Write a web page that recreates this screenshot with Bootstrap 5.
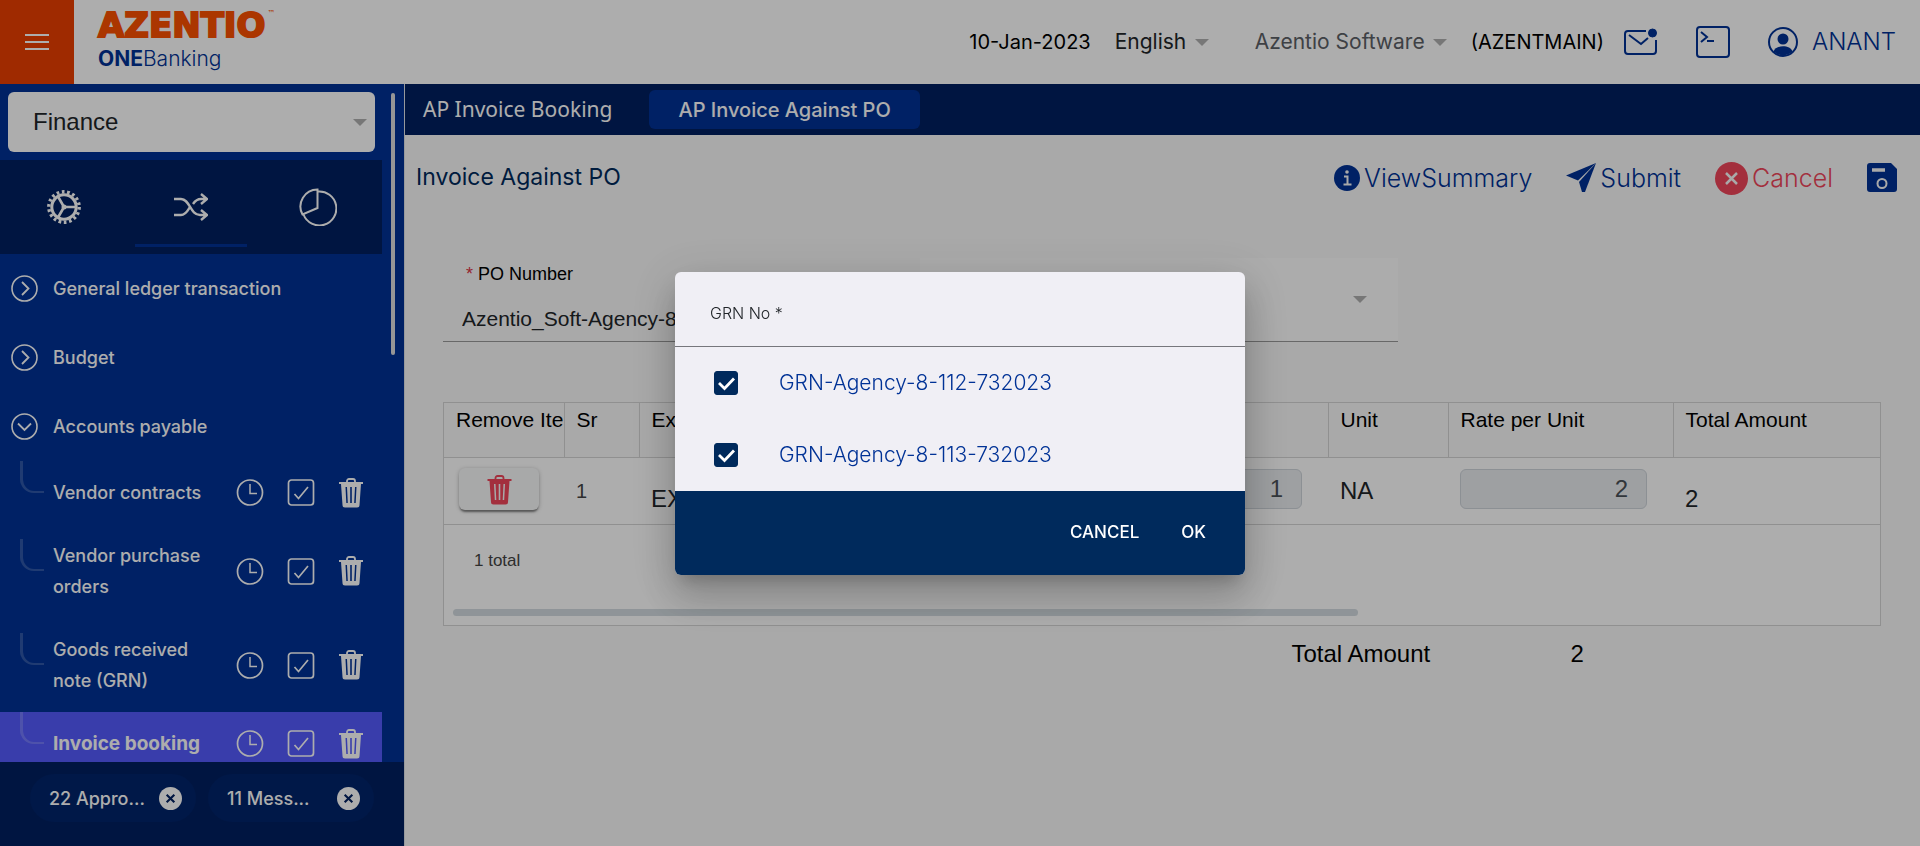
<!DOCTYPE html>
<html lang="en">
<head>
<meta charset="utf-8">
<meta name="viewport" content="width=device-width, initial-scale=1">
<title>Azentio ONEBanking - Invoice Against PO</title>
<link rel="stylesheet" href="https://cdn.jsdelivr.net/npm/bootstrap@5.3.0/dist/css/bootstrap.min.css">
<style>
  :root { --navy:#002060; --royal:#003296; --ink:#002a5c; --danger:#f0465a; --line:#d5d5d5; }
  body { font-family: Inter, "Liberation Sans", sans-serif; background:#fafafa; color:#212529; }
  .arial { font-family:"Liberation Sans", Arial, sans-serif; }
  a { text-decoration:none; }
  .caret-select { appearance:none; border:0; background:transparent url("data:image/svg+xml,%3Csvg xmlns='http://www.w3.org/2000/svg' width='14' height='7'%3E%3Cpath d='M0 0h14L7 7z' fill='%23b0b0b0'/%3E%3C/svg%3E") no-repeat right center; padding:0 22px 0 0; color:inherit; }

  /* top bar */
  .topbar { height:84px; background:#fff; }
  .burger { width:74px; background:#eb3f00; border:0; }
  .wordmark { font:bold 34px/34px "DejaVu Sans", sans-serif; color:#fc5000; -webkit-text-stroke:2px #fc5000; gap:2px; }
  .wordmark small { font-size:8px; line-height:12px; font-weight:400; -webkit-text-stroke:0; }
  .product { font-size:21px; line-height:34px; color:var(--royal); font-weight:300; }
  .product b { font-weight:700; }
  .top-text { font-size:20px; color:#000; }
  .top-select { font-size:21px; }
  .company { color:#5c6066; margin-left:46px; }
  .top-tools { gap:38px; margin-left:20px; }
  .user-name { font-size:24px; font-weight:300; color:var(--royal); gap:14px; }

  /* sidebar */
  .sidebar { width:404px; background:var(--royal); color:#fff; }
  .side-scroll { min-height:0; }
  .module-select { height:60px; margin:8px 29px 8px 8px; padding-left:25px; font-size:24px; border-radius:6px; background-color:#fff; background-position:right 8px center; color:#212529; width:367px; }
  .side-tabs { height:94px; width:382px; background:var(--navy); }
  .side-tabs a { color:#fff; height:94px; }
  .side-tabs a.active span { border-bottom:3px solid var(--royal); width:112px; height:87px; margin-bottom:7px; padding-top:9px; }
  .side-bar-thumb { width:4px; height:262px; right:9px; top:9px; background:#dedede; border-radius:2px; }
  .menu-link { height:69px; padding-left:11px; gap:15px; color:#fff; font-size:18px; font-weight:500; }
  .sub-row { width:382px; padding:16px 18px 16px 53px; font-size:18px; line-height:31px; font-weight:500; }
  .sub-row::before { content:""; position:absolute; left:20px; top:calc(50% - 32px); width:24px; height:32px; border-left:3px solid #ffffff30; border-bottom:2px solid #ffffff30; border-bottom-left-radius:14px; }
  .sub-row a { color:#fff; }
  .sub-row.current { background:#545bfd; font-size:19px; font-weight:700; }
  .sub-tools { gap:23px; }
  .plain-btn { border:0; background:none; padding:0; color:inherit; font-weight:inherit; line-height:1; display:flex; align-items:center; }
  .side-foot { height:84px; background:var(--navy); padding:0 30px 12px; gap:12px; }
  .chip { height:48px; width:166px; border-radius:24px; background:#00246a; padding:0 14px 0 19px; font-size:18px; font-weight:500; }

  /* work area */
  .tabstrip { height:51px; background:var(--navy); padding-left:18px; gap:37px; }
  .tabstrip a { color:#fff; font-size:20px; }
  .tabstrip .back-tab { font-family:"Noto Sans", sans-serif; font-size:21px; }
  .tabstrip .front-tab { height:39px; padding:0 29px; border-radius:6px; background:var(--royal); font-weight:500; }
  .page-head { padding:0 23px 0 11px; height:86px; }
  .page-head h1 { font-size:23px; font-weight:400; color:var(--ink); }
  .page-head button { font-size:25px; font-weight:300; color:var(--royal); gap:4px; }
  .page-head .cancel { color:var(--danger); }
  .head-actions { gap:34px; }
  .work-body { padding:37px 39px 0 38px; }
  .pair { width:66.4%; height:84px; border-bottom:1px solid #9a9a9a; }
  .pair > div { flex:1 1 50%; }
  .pair label { font-size:18px; line-height:22px; color:#000; padding:5px 0 0 23px; display:block; }
  .pair input { border:0; background:none; padding:0 0 0 19px; margin-top:12px; font-size:21px; width:100%; color:#212529; height:44px; }
  .grn-select { width:100%; height:83px; background-color:#fefefe; background-position:right 31px center; }
  .grid-box { margin-top:60px; border:1px solid var(--line); background:#fff; height:224px; }
  .grid-table { table-layout:fixed; width:100%; color:#212529; }
  .grid-table th { height:54px; font-size:21px; font-weight:400; line-height:24px; color:#000; padding:5px 0 0 12px; vertical-align:top; border-right:1px solid var(--line); border-bottom:1px solid var(--line); background:#fafafa; white-space:nowrap; overflow:hidden; }
  .grid-table th:last-child { border-right:0; }
  .grid-table td { height:67px; padding:0 12px; border-bottom:1px solid var(--line); font-size:24px; white-space:nowrap; vertical-align:middle; }
  .grid-table td.low { padding-top:16px; }
  .grid-table td.seq { font-size:20px; color:#444; }
  .grid-table td.entry { padding:0 26px 4px 12px; }
  .bin-btn { width:80px; height:42px; margin-left:3px; border:0; border-radius:6px; background:#f8f9fa; color:var(--danger); box-shadow:0 3px 2px -1px #0006, 0 1px 4px #0004; }
  .num-in { width:100%; height:40px; border:1px solid #ced4da; border-radius:6px; background:#e9ecef; color:#495057; text-align:right; padding:0 18px; font-size:24px; }
  .grid-total { font-size:17px; line-height:28px; color:#444; padding:22px 30px 0; }
  .grid-thumb { height:7px; width:63%; margin:34px 0 0 9px; border-radius:4px; background:#d3dbe0; }
  .sum-line { font-size:24px; color:#000; margin-top:10px; padding-left:59%; }
  .sum-line span:first-child { width:279px; }

  /* dialog */
  .modal-backdrop.show { opacity:.32; }
  .modal-dialog { max-width:570px; }
  .modal-content { border:0; border-radius:6px; overflow:hidden; background:#f0eff5; box-shadow:0 11px 15px -7px #0003, 0 24px 38px 3px #00000024, 0 9px 46px 8px #0000001f; }
  .dlg-head { height:75px; padding:8px 35px 0; border-bottom:1px solid #76767c; font-size:16px; font-weight:300; color:#212529; }
  .dlg-row { height:72px; padding-left:39px; gap:41px; font-size:21px; font-weight:300; color:#003296; }
  .dlg-row .form-check-input { width:24px; height:24px; margin:0; border-radius:3px; }
  .dlg-row .form-check-input:checked { background-color:var(--ink); border-color:var(--ink); background-size:24px; background-image:url("data:image/svg+xml,%3Csvg xmlns='http://www.w3.org/2000/svg' viewBox='0 0 24 24'%3E%3Cpath d='M5 12l5.500 5.500L20 7.500' fill='none' stroke='%23fff' stroke-width='2.800'/%3E%3C/svg%3E"); }
  .dlg-foot { height:84px; background:var(--ink); padding-right:39px; gap:42px; color:#fff; font-size:17px; font-weight:500; }
</style>
</head>
<body class="vh-100 overflow-hidden d-flex flex-column">

<svg class="d-none">
  <symbol id="i-next" viewBox="0 0 27 27"><circle cx="13.500" cy="13.500" r="12.500" fill="none" stroke="currentColor" stroke-width="1.600"/><path d="M11 7l6.500 6.500L11 20" fill="none" stroke="currentColor" stroke-width="1.800"/></symbol>
  <symbol id="i-open" viewBox="0 0 27 27"><circle cx="13.500" cy="13.500" r="12.500" fill="none" stroke="currentColor" stroke-width="1.600"/><path d="M7 10.500l6.500 6.500 6.500-6.500" fill="none" stroke="currentColor" stroke-width="1.800"/></symbol>
  <symbol id="i-clock" viewBox="0 0 27 27"><circle cx="13.500" cy="13.500" r="12.500" fill="none" stroke="currentColor" stroke-width="1.700"/><path d="M13.500 5v9.500h7" fill="none" stroke="currentColor" stroke-width="1.500"/></symbol>
  <symbol id="i-tick" viewBox="0 0 27 27"><rect x="1" y="1" width="25" height="25" rx="3" fill="none" stroke="currentColor" stroke-width="1.700"/><path d="M7 15l4 4.500L20.500 8" fill="none" stroke="currentColor" stroke-width="1.700"/></symbol>
  <symbol id="i-bin" viewBox="0 0 25 30"><path d="M8.500 4.500V3a2 2 0 0 1 2-2h4a2 2 0 0 1 2 2v1.500" fill="none" stroke="currentColor" stroke-width="1.800"/><path fill="currentColor" fill-rule="evenodd" d="M.5 4h24v2H22.500L21 27a2.500 2.500 0 0 1-2.500 2.500h-12A2.500 2.500 0 0 1 4 27L2.500 6H.5zM7 9l.8 16h1.500L8.500 9zM11.700 9v16h1.600V9zM16.500 9l-.8 16h1.500L18 9z"/></symbol>
  <symbol id="i-x" viewBox="0 0 24 24"><circle cx="12" cy="12" r="12" fill="currentColor"/></symbol>
</svg>

<header class="topbar d-flex flex-shrink-0">
  <button class="burger d-flex align-items-center justify-content-center" aria-label="Menu"><svg width="24" height="16" viewBox="0 0 24 16" stroke="#fff" stroke-width="2"><path d="M0 1h24M0 8h24M0 15h24"/></svg></button>
  <div class="ps-4 pt-2">
    <div class="wordmark d-flex">AZENTIO<small>™</small></div>
    <div class="product"><b>ONE</b>Banking</div>
  </div>
  <div class="d-flex align-items-center ms-auto pe-4">
    <span class="top-text">10-Jan-2023</span>
    <select class="caret-select top-select ms-4" aria-label="Language"><option>English</option></select>
    <select class="caret-select top-select company" aria-label="Company"><option>Azentio Software</option></select>
    <span class="top-text ms-4">(AZENTMAIN)</span>
    <div class="top-tools d-flex align-items-center">
      <a href="#" aria-label="Messages"><svg width="34" height="28" viewBox="0 0 34 28" fill="none" stroke="#003296" stroke-width="2"><path d="M22 3H4a3 3 0 0 0-3 3v17a3 3 0 0 0 3 3h25a3 3 0 0 0 3-3V12"/><path d="M5 7l12 9 7-6"/><circle cx="28.500" cy="5" r="4" fill="#003296" stroke-width="1"/></svg></a>
      <a href="#" aria-label="Console"><svg width="34" height="32" viewBox="0 0 34 32" fill="none" stroke="#003296" stroke-width="2"><rect x="1" y="1" width="32" height="30" rx="3"/><path d="M5 6l6 5-6 5M11 15h7"/></svg></a>
      <a href="#" class="user-name d-flex align-items-center"><svg width="30" height="30" viewBox="0 0 30 30"><circle cx="15" cy="15" r="14" fill="none" stroke="#003296" stroke-width="2"/><circle cx="15" cy="12" r="5.500" fill="#003296"/><path d="M5.500 24.500c2-7 17-7 19 0a14 14 0 0 1-19 0z" fill="#003296"/></svg>ANANT</a>
    </div>
  </div>
</header>

<div class="d-flex flex-grow-1 side-scroll">
  <aside class="sidebar flex-shrink-0 d-flex flex-column">
    <div class="side-scroll flex-grow-1 overflow-hidden position-relative">
      <select class="caret-select module-select arial d-block" aria-label="Module"><option>Finance</option></select>
      <nav class="side-tabs d-flex">
        <a href="#" class="col-4 d-flex align-items-center justify-content-center" aria-label="Settings"><svg width="34" height="34" viewBox="0 0 34 34" fill="none" stroke="#fff"><circle cx="17" cy="17" r="15.200" stroke-width="3.400" stroke-dasharray="2.700 2.606"/><circle cx="17" cy="17" r="12.200" stroke-width="3"/><circle cx="17" cy="17" r="1.500" stroke-width="2"/><path d="M17 17h12M17 17l-6-10.500M17 17l-6 10.500" stroke-width="2.600"/></svg></a>
        <a href="#" class="active col-4 d-flex align-items-center justify-content-center" aria-label="Transactions"><span class="d-flex align-items-center justify-content-center"><svg width="34" height="28" viewBox="0 0 34 28" fill="none" stroke="#fff" stroke-width="2.400"><path d="M0 6h7c9 0 9 16 19 16h7M0 22h7c5 0 7-5 9-8M19 11c2-3 4-5 8-5h6M27 1l6 5-6 5M27 17l6 5-6 5"/></svg></span></a>
        <a href="#" class="col-4 d-flex align-items-center justify-content-center" aria-label="Reports"><svg width="38" height="38" viewBox="0 0 38 38" fill="none" stroke="#fff" stroke-width="2"><path d="M18.500 1.500V20L3.500 26.500A17 17 0 0 1 18.500 1.500z"/><path d="M18.500 3.500A17 17 0 1 1 4.500 26.500"/></svg></a>
      </nav>
      <nav>
        <a href="#" class="menu-link d-flex align-items-center"><svg width="27" height="27"><use href="#i-next"/></svg>General ledger transaction</a>
        <a href="#" class="menu-link d-flex align-items-center"><svg width="27" height="27"><use href="#i-next"/></svg>Budget</a>
        <a href="#" class="menu-link d-flex align-items-center"><svg width="27" height="27"><use href="#i-open"/></svg>Accounts payable</a>
        <div class="sub-row position-relative d-flex align-items-center justify-content-between"><a href="#">Vendor contracts</a>
          <div class="sub-tools d-flex align-items-center"><button class="plain-btn" aria-label="Pending"><svg width="28" height="27"><use href="#i-clock"/></svg></button><button class="plain-btn" aria-label="Approve"><svg width="28" height="27"><use href="#i-tick"/></svg></button><button class="plain-btn" aria-label="Delete"><svg width="26" height="30"><use href="#i-bin"/></svg></button></div></div>
        <div class="sub-row position-relative d-flex align-items-center justify-content-between"><a href="#">Vendor purchase<br>orders</a>
          <div class="sub-tools d-flex align-items-center"><button class="plain-btn" aria-label="Pending"><svg width="28" height="27"><use href="#i-clock"/></svg></button><button class="plain-btn" aria-label="Approve"><svg width="28" height="27"><use href="#i-tick"/></svg></button><button class="plain-btn" aria-label="Delete"><svg width="26" height="30"><use href="#i-bin"/></svg></button></div></div>
        <div class="sub-row position-relative d-flex align-items-center justify-content-between"><a href="#">Goods received<br>note (GRN)</a>
          <div class="sub-tools d-flex align-items-center"><button class="plain-btn" aria-label="Pending"><svg width="28" height="27"><use href="#i-clock"/></svg></button><button class="plain-btn" aria-label="Approve"><svg width="28" height="27"><use href="#i-tick"/></svg></button><button class="plain-btn" aria-label="Delete"><svg width="26" height="30"><use href="#i-bin"/></svg></button></div></div>
        <div class="sub-row current position-relative d-flex align-items-center justify-content-between"><a href="#">Invoice booking</a>
          <div class="sub-tools d-flex align-items-center"><button class="plain-btn" aria-label="Pending"><svg width="28" height="27"><use href="#i-clock"/></svg></button><button class="plain-btn" aria-label="Approve"><svg width="28" height="27"><use href="#i-tick"/></svg></button><button class="plain-btn" aria-label="Delete"><svg width="26" height="30"><use href="#i-bin"/></svg></button></div></div>
      </nav>
      <div class="side-bar-thumb position-absolute"></div>
    </div>
    <div class="side-foot d-flex align-items-center flex-shrink-0">
      <div class="chip d-flex align-items-center justify-content-between"><span>22 Appro...</span><button class="plain-btn" aria-label="Dismiss"><svg width="23" height="23" viewBox="0 0 24 24"><use href="#i-x"/><path d="M8 8l8 8M16 8l-8 8" stroke="#002060" stroke-width="2.200"/></svg></button></div>
      <div class="chip d-flex align-items-center justify-content-between"><span>11 Mess...</span><button class="plain-btn" aria-label="Dismiss"><svg width="23" height="23" viewBox="0 0 24 24"><use href="#i-x"/><path d="M8 8l8 8M16 8l-8 8" stroke="#002060" stroke-width="2.200"/></svg></button></div>
    </div>
  </aside>

  <main class="flex-grow-1 border-start overflow-hidden">
    <nav class="tabstrip d-flex align-items-center">
      <a href="#" class="back-tab">AP Invoice Booking</a>
      <a href="#" class="front-tab d-flex align-items-center">AP Invoice Against PO</a>
    </nav>
    <div class="page-head d-flex align-items-center justify-content-between">
      <h1 class="m-0">Invoice Against PO</h1>
      <div class="head-actions d-flex align-items-center">
        <button class="plain-btn"><svg width="26" height="26" viewBox="0 0 26 26"><circle cx="13" cy="13" r="13" fill="#003296"/><circle cx="13" cy="7" r="1.800" fill="#fafafa"/><path d="M10 11.500h3.500V19M9.500 19.500h8" fill="none" stroke="#fafafa" stroke-width="2"/></svg>ViewSummary</button>
        <button class="plain-btn"><svg width="30" height="30" viewBox="0 0 30 30"><path d="M0 12.500L30 0 12 17.500z" fill="#003296"/><path d="M30 0L19 29 16 29 13 19z" fill="#003296"/></svg>Submit</button>
        <button class="plain-btn cancel"><svg width="33" height="33" viewBox="0 0 24 24"><use href="#i-x"/><path d="M8 8l8 8M16 8l-8 8" stroke="#fafafa" stroke-width="1.800"/></svg>Cancel</button>
        <button class="plain-btn" aria-label="Save"><svg width="30" height="30" viewBox="0 0 30 30"><path d="M3 0h21l6 6v20a3 3 0 0 1-3 3H3a3 3 0 0 1-3-3V3a3 3 0 0 1 3-3z" fill="#003296"/><path d="M5 7h13" stroke="#fafafa" stroke-width="3.500"/><circle cx="15" cy="20.500" r="4.500" fill="none" stroke="#fafafa" stroke-width="2"/></svg></button>
      </div>
    </div>

    <div class="work-body arial">
      <div class="pair d-flex">
        <div>
          <label for="po"><span class="text-danger">*</span> PO Number</label>
          <input id="po" type="text" value="Azentio_Soft-Agency-8">
        </div>
        <div><select class="caret-select grn-select" aria-label="GRN No"><option></option></select></div>
      </div>

      <div class="grid-box">
        <table class="grid-table">
          <colgroup><col style="width:120px"><col style="width:75px"><col style="width:242px"><col style="width:223px"><col style="width:224px"><col style="width:120px"><col style="width:225px"><col></colgroup>
          <thead><tr><th>Remove Ite</th><th>Sr</th><th>Expense Code</th><th></th><th></th><th>Unit</th><th>Rate per Unit</th><th>Total Amount</th></tr></thead>
          <tbody><tr>
            <td class="pb-1"><button class="bin-btn" aria-label="Remove item"><svg width="25" height="30"><use href="#i-bin"/></svg></button></td>
            <td class="seq">1</td><td class="low">EXP</td><td></td>
            <td class="entry"><input class="num-in arial" type="text" value="1" aria-label="Invoice quantity" disabled></td>
            <td>NA</td>
            <td class="entry"><input class="num-in arial" type="text" value="2" aria-label="Rate per unit" disabled></td>
            <td class="low">2</td>
          </tr></tbody>
        </table>
        <div class="grid-total">1 total</div>
        <div class="grid-thumb"></div>
      </div>
      <div class="sum-line d-flex"><span>Total Amount</span><span>2</span></div>
    </div>
  </main>
</div>

<div class="modal-backdrop show"></div>
<div class="modal d-block" role="dialog" aria-modal="true" aria-labelledby="dlgTitle">
  <div class="modal-dialog modal-dialog-centered">
    <div class="modal-content">
      <div class="dlg-head d-flex align-items-center" id="dlgTitle">GRN No *</div>
      <div>
        <div class="dlg-row d-flex align-items-center"><input class="form-check-input" type="checkbox" id="g112" checked><label for="g112">GRN-Agency-8-112-732023</label></div>
        <div class="dlg-row d-flex align-items-center"><input class="form-check-input" type="checkbox" id="g113" checked><label for="g113">GRN-Agency-8-113-732023</label></div>
      </div>
      <div class="dlg-foot d-flex align-items-center justify-content-end"><button class="plain-btn">CANCEL</button><button class="plain-btn">OK</button></div>
    </div>
  </div>
</div>

<script src="https://cdn.jsdelivr.net/npm/bootstrap@5.3.0/dist/js/bootstrap.bundle.min.js"></script>
</body>
</html>
